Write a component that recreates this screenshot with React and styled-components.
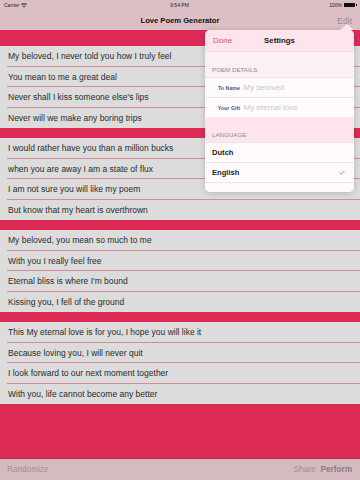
import React from "react";
import styled, { createGlobalStyle } from "styled-components";

const Global = createGlobalStyle`
  html, body { margin: 0; padding: 0; }
  body { font-family: "Liberation Sans", Arial, sans-serif; background: #dcdcdc; }
  * { box-sizing: border-box; }
`;

const Screen = styled.div`
  position: relative;
  width: 360px;
  height: 480px;
  overflow: hidden;
  display: flex;
  flex-direction: column;
  background: #dcdcdc;
`;

const StatusBar = styled.div`
  height: 10px;
  background: #dcbec5;
  display: grid;
  grid-template-columns: 1fr auto 1fr;
  align-items: center;
  padding: 0 5px 0 4px;
  font-size: 5px;
  color: #222;
`;

const StatusLeft = styled.div`
  display: flex;
  align-items: center;
  gap: 2px;
`;

const StatusRight = styled.div`
  display: flex;
  align-items: center;
  justify-content: flex-end;
  gap: 2px;
`;

const Battery = styled.div`
  width: 11px;
  height: 4px;
  background: #111;
  border-radius: 0.5px;
  position: relative;
  &::after {
    content: "";
    position: absolute;
    right: -1.5px;
    top: 1px;
    width: 1px;
    height: 2px;
    background: #111;
  }
`;

const NavBar = styled.div`
  height: 20px;
  background: #dcbec5;
  display: flex;
  align-items: center;
  justify-content: center;
  position: relative;
  font-size: 7.6px;
  font-weight: bold;
  color: #111;
`;

const NavEdit = styled.span`
  position: absolute;
  right: 8px;
  top: 5.5px;
  font-weight: normal;
  font-size: 8.5px;
  color: #9a8f92;
`;

const Band = styled.div`
  height: ${(p) => p.$h}px;
  background: #dc2a55;
  flex: none;
`;

const Row = styled.div`
  height: 20.5px;
  flex: none;
  display: flex;
  align-items: center;
  padding-left: 8px;
  font-size: 8.5px;
  color: #2a2a2a;
  background: #dcdcdc;
  position: relative;
  &::after {
    content: "";
    display: ${(p) => (p.$last ? "none" : "block")};
    position: absolute;
    left: 7px;
    right: 0;
    bottom: 0;
    height: 1px;
    background: #d78a9c;
  }
`;

const Filler = styled.div`
  flex: 1;
  background: #dc2a55;
  border-bottom: 1px solid #b5264a;
`;

const Toolbar = styled.div`
  height: 21px;
  flex: none;
  background: #d5bbbf;
  display: flex;
  align-items: center;
  padding: 0 8px 0 7px;
  font-size: 8.2px;
  color: #8e8a8b;
`;

const ToolSpacer = styled.div`
  flex: 1;
`;

const ToolItem = styled.span`
  font-weight: ${(p) => (p.$bold ? "bold" : "normal")};
  color: ${(p) => (p.$bold ? "#858083" : "#999395")};
  margin-left: ${(p) => (p.$gap ? 5 : 0)}px;
`;

const Popover = styled.div`
  position: absolute;
  left: 205px;
  top: 30px;
  width: 149px;
  height: 162px;
  background: #fefafb;
  border-radius: 5px;
  box-shadow: 0 1px 6px rgba(0, 0, 0, 0.18);
  display: flex;
  flex-direction: column;
  overflow: visible;
`;

const Arrow = styled.div`
  position: absolute;
  top: -6px;
  right: 0px;
  width: 0;
  height: 0;
  border-left: 7px solid transparent;
  border-right: 7px solid transparent;
  border-bottom: 6px solid #fde5eb;
`;

const PopHeader = styled.div`
  height: 22px;
  flex: none;
  background: #fde5eb;
  border-radius: 5px 5px 0 0;
  border-bottom: 1px solid #eedde2;
  display: flex;
  align-items: center;
  justify-content: center;
  position: relative;
  font-size: 7.8px;
  font-weight: bold;
  color: #1a1a1a;
`;

const Done = styled.span`
  position: absolute;
  left: 8px;
  font-size: 8px;
  font-weight: 500;
  color: #e8497a;
`;

const SectionHead = styled.div`
  height: ${(p) => p.$h}px;
  flex: none;
  background: ${(p) => p.$bg};
  display: flex;
  align-items: flex-end;
  padding: 0 0 4px 7px;
  font-size: 6.2px;
  color: #8d8a8c;
`;

const PopRow = styled.div`
  height: 20px;
  flex: none;
  display: flex;
  align-items: center;
  padding: 0 9px 0 7px;
  position: relative;
  background: #fffbfc;
  border-top: 1px solid #ece4e6;
`;

const FieldLabel = styled.span`
  width: 28px;
  text-align: right;
  font-size: 5.3px;
  font-weight: bold;
  color: #4f5b82;
  margin-right: 3.5px;
`;

const Placeholder = styled.span`
  font-size: 8px;
  color: #c9c7cb;
`;

const Option = styled.span`
  flex: 1;
  font-size: 7.6px;
  font-weight: bold;
  color: #1d1d1d;
`;

const PopBottom = styled.div`
  flex: 1;
  background: #fefafb;
  border-top: 1px solid #ece4e6;
  border-radius: 0 0 5px 5px;
`;

const sections = [
  [
    "My beloved, I never told you how I truly feel",
    "You mean to me a great deal",
    "Never shall I kiss someone else's lips",
    "Never will we make any boring trips",
  ],
  [
    "I would rather have you than a million bucks",
    "when you are away I am a state of flux",
    "I am not sure you will like my poem",
    "But know that my heart is overthrown",
  ],
  [
    "My beloved, you mean so much to me",
    "With you I really feel free",
    "Eternal bliss is where I'm bound",
    "Kissing you, I fell of the ground",
  ],
  [
    "This My eternal love is for you, I hope you will like it",
    "Because loving you, I will never quit",
    "I look forward to our next moment together",
    "With you, life cannot become any better",
  ],
];

function Wifi() {
  return (
    <svg width="6" height="5" viewBox="0 0 12 9">
      <path d="M6 8.5 L8.2 6 A3.2 3.2 0 0 0 3.8 6 Z" fill="#222" />
      <path d="M1.8 3.8 A6 6 0 0 1 10.2 3.8" stroke="#222" strokeWidth="1.4" fill="none" />
      <path d="M0.2 2 A8.4 8.4 0 0 1 11.8 2" stroke="#222" strokeWidth="1.4" fill="none" />
    </svg>
  );
}

function Check() {
  return (
    <svg width="6" height="5" viewBox="0 0 12 10">
      <polyline points="1,5.5 4.3,8.5 11,1.5" fill="none" stroke="#e8497a" strokeWidth="1.6" />
    </svg>
  );
}

export default function App() {
  return (
    <Screen>
      <Global />
      <StatusBar>
        <StatusLeft>
          <span>Carrier</span>
          <Wifi />
        </StatusLeft>
        <span>9:54 PM</span>
        <StatusRight>
          <span>100%</span>
          <Battery />
        </StatusRight>
      </StatusBar>
      <NavBar>
        Love Poem Generator
        <NavEdit>Edit</NavEdit>
      </NavBar>
      {sections.map((rows, i) => (
        <React.Fragment key={i}>
          <Band $h={i === 0 ? 16 : 10} />
          {rows.map((t, j) => (
            <Row key={j} $last={j === rows.length - 1}>
              {t}
            </Row>
          ))}
        </React.Fragment>
      ))}
      <Filler />
      <Toolbar>
        <ToolItem>Randomize</ToolItem>
        <ToolSpacer />
        <ToolItem>Share</ToolItem>
        <ToolItem $bold $gap>
          Perform
        </ToolItem>
      </Toolbar>

      <Popover>
        <Arrow />
        <PopHeader>
          <Done>Done</Done>
          Settings
        </PopHeader>
        <SectionHead $h={25} $bg="#fbf0f3">
          POEM DETAILS
        </SectionHead>
        <PopRow>
          <FieldLabel>To Name</FieldLabel>
          <Placeholder>My beloved</Placeholder>
        </PopRow>
        <PopRow>
          <FieldLabel>Your Gift</FieldLabel>
          <Placeholder>My eternal love</Placeholder>
        </PopRow>
        <SectionHead $h={25} $bg="#fde5eb">
          LANGUAGE
        </SectionHead>
        <PopRow>
          <Option>Dutch</Option>
        </PopRow>
        <PopRow>
          <Option>English</Option>
          <Check />
        </PopRow>
        <PopBottom />
      </Popover>
    </Screen>
  );
}
